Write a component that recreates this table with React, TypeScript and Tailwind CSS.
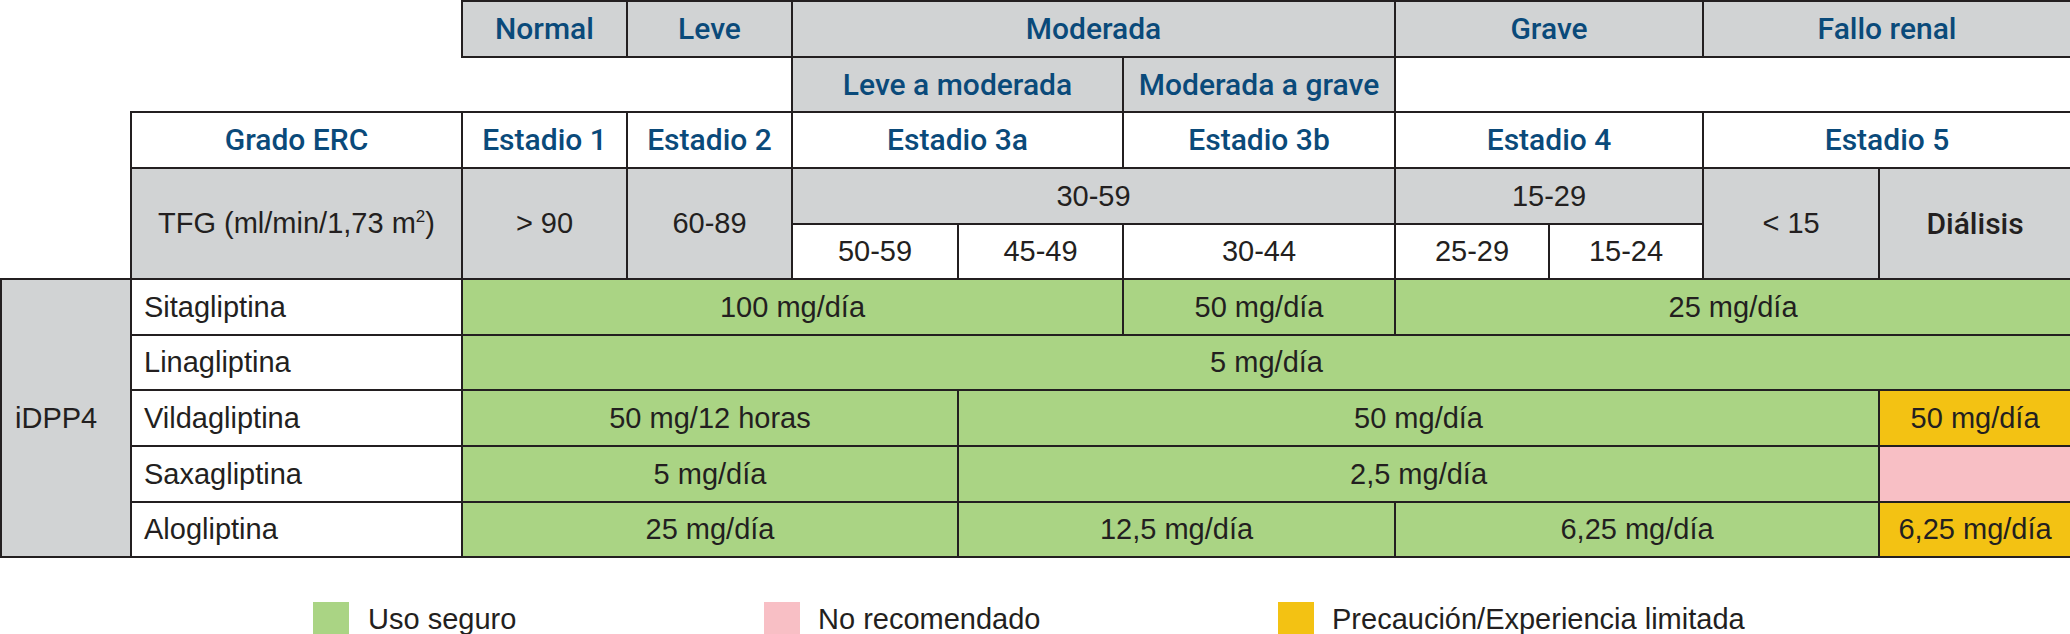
import React from "react";

const B = "border-2 border-[#231f20]";
const GRAY = "bg-[#d1d3d4]";
const GREEN = "bg-[#aad484]";
const YELLOW = "bg-[#f3c213]";
const PINK = "bg-[#f8bfc5]";
const HEAD = "font-['Roboto',sans-serif] font-medium text-[#0a4a7a] text-[30px]";
const BODY = "font-['Liberation_Sans',Arial,sans-serif] text-[#231f20] text-[29px]";

type CellProps = {
  cs?: number;
  rs?: number;
  cls?: string;
  children?: React.ReactNode;
};

function C({ cs, rs, cls = "", children }: CellProps) {
  return (
    <td colSpan={cs} rowSpan={rs} className={`${B} p-0 text-center align-middle leading-none ${cls}`}>
      {children}
    </td>
  );
}

export default function App() {
  return (
    <div className="w-[2070px] h-[634px] bg-white overflow-hidden">
      <table className="table-fixed border-collapse w-[2070px]">
        <colgroup>
          <col className="w-[130px]" />
          <col className="w-[331px]" />
          <col className="w-[165px]" />
          <col className="w-[165px]" />
          <col className="w-[166px]" />
          <col className="w-[165px]" />
          <col className="w-[272px]" />
          <col className="w-[154px]" />
          <col className="w-[154px]" />
          <col className="w-[176px]" />
          <col className="w-[192px]" />
        </colgroup>
        <tbody>
          <tr className="h-[56px]">
            <td colSpan={2} rowSpan={2} className="border-0 p-0" />
            <C cls={`${GRAY} ${HEAD}`}>Normal</C>
            <C cls={`${GRAY} ${HEAD}`}>Leve</C>
            <C cs={3} cls={`${GRAY} ${HEAD}`}>Moderada</C>
            <C cs={2} cls={`${GRAY} ${HEAD}`}>Grave</C>
            <C cs={2} cls={`${GRAY} ${HEAD}`}>Fallo renal</C>
          </tr>
          <tr className="h-[55px]">
            <td colSpan={2} className="border-0 p-0" />
            <C cs={2} cls={`${GRAY} ${HEAD}`}>Leve a moderada</C>
            <C cls={`${GRAY} ${HEAD}`}>Moderada a grave</C>
            <C cs={4} cls="bg-white" />
          </tr>
          <tr className="h-[56px]">
            <td rowSpan={3} className="border-0 p-0" />
            <C cls={`bg-white ${HEAD}`}>Grado ERC</C>
            <C cls={`bg-white ${HEAD}`}>Estadio 1</C>
            <C cls={`bg-white ${HEAD}`}>Estadio 2</C>
            <C cs={2} cls={`bg-white ${HEAD}`}>Estadio 3a</C>
            <C cls={`bg-white ${HEAD}`}>Estadio 3b</C>
            <C cs={2} cls={`bg-white ${HEAD}`}>Estadio 4</C>
            <C cs={2} cls={`bg-white ${HEAD}`}>Estadio 5</C>
          </tr>
          <tr className="h-[56px]">
            <C rs={2} cls={`${GRAY} ${BODY}`}>
              TFG (ml/min/1,73 m<sup className="text-[17px] -top-[11px]">2</sup>)
            </C>
            <C rs={2} cls={`${GRAY} ${BODY}`}>&gt; 90</C>
            <C rs={2} cls={`${GRAY} ${BODY}`}>60-89</C>
            <C cs={3} cls={`${GRAY} ${BODY}`}>30-59</C>
            <C cs={2} cls={`${GRAY} ${BODY}`}>15-29</C>
            <C rs={2} cls={`${GRAY} ${BODY}`}>&lt; 15</C>
            <C rs={2} cls={`${GRAY} font-['Roboto',sans-serif] font-medium text-[#231f20] text-[30px]`}>Diálisis</C>
          </tr>
          <tr className="h-[55px]">
            <C cls={`bg-white ${BODY}`}>50-59</C>
            <C cls={`bg-white ${BODY}`}>45-49</C>
            <C cls={`bg-white ${BODY}`}>30-44</C>
            <C cls={`bg-white ${BODY}`}>25-29</C>
            <C cls={`bg-white ${BODY}`}>15-24</C>
          </tr>
          <tr className="h-[56px]">
            <td rowSpan={5} className={`${B} ${GRAY} ${BODY} p-0 pl-[13px] text-left align-middle leading-none`}>iDPP4</td>
            <td className={`${B} bg-white ${BODY} p-0 pl-[12px] text-left align-middle leading-none`}>Sitagliptina</td>
            <C cs={4} cls={`${GREEN} ${BODY}`}>100 mg/día</C>
            <C cls={`${GREEN} ${BODY}`}>50 mg/día</C>
            <C cs={4} cls={`${GREEN} ${BODY}`}>25 mg/día</C>
          </tr>
          <tr className="h-[55px]">
            <td className={`${B} bg-white ${BODY} p-0 pl-[12px] text-left align-middle leading-none`}>Linagliptina</td>
            <C cs={9} cls={`${GREEN} ${BODY}`}>5 mg/día</C>
          </tr>
          <tr className="h-[56px]">
            <td className={`${B} bg-white ${BODY} p-0 pl-[12px] text-left align-middle leading-none`}>Vildagliptina</td>
            <C cs={3} cls={`${GREEN} ${BODY}`}>50 mg/12 horas</C>
            <C cs={5} cls={`${GREEN} ${BODY}`}>50 mg/día</C>
            <C cls={`${YELLOW} ${BODY}`}>50 mg/día</C>
          </tr>
          <tr className="h-[56px]">
            <td className={`${B} bg-white ${BODY} p-0 pl-[12px] text-left align-middle leading-none`}>Saxagliptina</td>
            <C cs={3} cls={`${GREEN} ${BODY}`}>5 mg/día</C>
            <C cs={5} cls={`${GREEN} ${BODY}`}>2,5 mg/día</C>
            <C cls={PINK} />
          </tr>
          <tr className="h-[55px]">
            <td className={`${B} bg-white ${BODY} p-0 pl-[12px] text-left align-middle leading-none`}>Alogliptina</td>
            <C cs={3} cls={`${GREEN} ${BODY}`}>25 mg/día</C>
            <C cs={2} cls={`${GREEN} ${BODY}`}>12,5 mg/día</C>
            <C cs={3} cls={`${GREEN} ${BODY}`}>6,25 mg/día</C>
            <C cls={`${YELLOW} ${BODY}`}>6,25 mg/día</C>
          </tr>
        </tbody>
      </table>

      <div className={`flex items-center mt-[40px] pl-[313px] ${BODY}`}>
        <div className="flex items-center w-[451px] gap-[19px]">
          <span className={`block w-[36px] h-[36px] ${GREEN}`} />
          <span>Uso seguro</span>
        </div>
        <div className="flex items-center w-[514px] gap-[18px]">
          <span className={`block w-[36px] h-[36px] ${PINK}`} />
          <span>No recomendado</span>
        </div>
        <div className="flex items-center gap-[18px]">
          <span className={`block w-[36px] h-[36px] ${YELLOW}`} />
          <span>Precaución/Experiencia limitada</span>
        </div>
      </div>
    </div>
  );
}
